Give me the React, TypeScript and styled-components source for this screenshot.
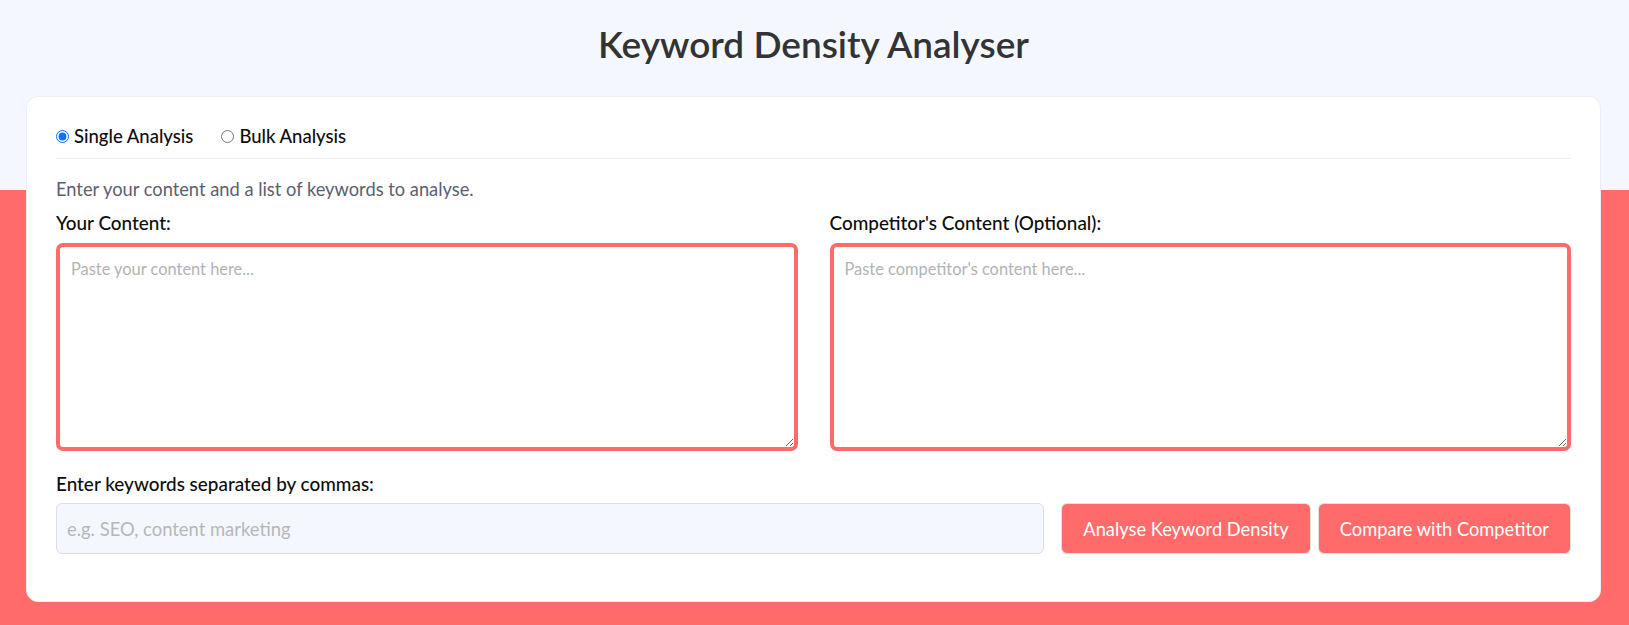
import styled, { createGlobalStyle } from "styled-components";

const GlobalStyle = createGlobalStyle`
	* {
		box-sizing: border-box;
	}
	body {
		margin: 0;
		font-family: "Lato", "Liberation Sans", sans-serif;
		color: #1c1c1c;
	}
`;

const StyledPage = styled.main`
	min-height: 625px;
	padding: 22px 28px 22px 26px;
	background: linear-gradient(to bottom, #f4f7fe 0, #f4f7fe 190px, #ff6b6b 190px);
`;

const Title = styled.h1`
	margin: 0 0 31px;
	text-align: center;
	font-size: 37px;
	line-height: 43px;
	font-weight: 600;
	color: #333333;
`;

const Card = styled.section`
	background: #ffffff;
	border: 1px solid #eceef3;
	border-radius: 12px;
	padding: 29px 29px 47px;
`;

const ModeRow = styled.div`
	display: flex;
	align-items: center;
	gap: 28px;
	padding-bottom: 12px;
	border-bottom: 1px solid #eef0f3;
`;

const RadioLabel = styled.label`
	display: flex;
	align-items: center;
	font-size: 18.5px;
	line-height: 20px;
	font-weight: 500;
	color: #0d0d0d;
	cursor: pointer;

	input {
		margin: 0 5px 0 0;
		width: 13px;
		height: 13px;
	}
`;

const Description = styled.p`
	margin: 18px 0 11px;
	font-size: 18.3px;
	line-height: 24px;
	color: #5b5f70;
`;

const Columns = styled.div`
	display: grid;
	grid-template-columns: 1fr 1fr;
	gap: 32px;
`;

const Field = styled.div`
	display: flex;
	flex-direction: column;
`;

const FieldLabel = styled.label<{ $gap?: number }>`
	display: block;
	margin-bottom: ${(p) => p.$gap ?? 9}px;
	font-size: 18.9px;
	line-height: 22px;
	font-weight: 500;
	color: #0d0d0d;
`;

const TextArea = styled.textarea`
	height: 208px;
	width: 100%;
	padding: 12px 11px;
	border: 4px solid #ff6b6b;
	border-radius: 7px;
	outline: none;
	font-family: inherit;
	font-size: 16.4px;
	line-height: 20px;
	color: #222;

	&::placeholder {
		color: #b3b3b3;
	}
`;

const KeywordBlock = styled.div`
	margin-top: 22px;
`;

const InputRow = styled.div`
	display: flex;
	align-items: stretch;
`;

const KeywordInput = styled.input`
	flex: 1;
	height: 51px;
	padding: 0 10px;
	margin-right: 17px;
	background: #f4f7fe;
	border: 1px solid #dcdee3;
	border-radius: 6px;
	outline: none;
	font-family: inherit;
	font-size: 18.4px;
	color: #222;

	&::placeholder {
		color: #b5b7bc;
	}
`;

const Buttons = styled.div`
	display: flex;
	gap: 7px;
`;

const Button = styled.button`
	height: 51px;
	padding: 0 21px;
	background: #ff6b6b;
	border: 1px solid #e3e3e3;
	border-radius: 6px;
	color: #ffffff;
	font-family: inherit;
	font-size: 18.3px;
	cursor: pointer;
`;

const App = () => {
	return (
		<>
			<GlobalStyle />
			<StyledPage>
				<Title>Keyword Density Analyser</Title>
				<Card>
					<ModeRow>
						<RadioLabel>
							<input type="radio" name="mode" defaultChecked />
							Single Analysis
						</RadioLabel>
						<RadioLabel>
							<input type="radio" name="mode" />
							Bulk Analysis
						</RadioLabel>
					</ModeRow>

					<Description>Enter your content and a list of keywords to analyse.</Description>

					<Columns>
						<Field>
							<FieldLabel htmlFor="content">Your Content:</FieldLabel>
							<TextArea id="content" placeholder="Paste your content here..." />
						</Field>
						<Field>
							<FieldLabel htmlFor="competitor">Competitor's Content (Optional):</FieldLabel>
							<TextArea id="competitor" placeholder="Paste competitor's content here..." />
						</Field>
					</Columns>

					<KeywordBlock>
						<FieldLabel htmlFor="keywords" $gap={8}>
							Enter keywords separated by commas:
						</FieldLabel>
						<InputRow>
							<KeywordInput id="keywords" placeholder="e.g. SEO, content marketing" />
							<Buttons>
								<Button type="button">Analyse Keyword Density</Button>
								<Button type="button">Compare with Competitor</Button>
							</Buttons>
						</InputRow>
					</KeywordBlock>
				</Card>
			</StyledPage>
		</>
	);
};

export default App;
